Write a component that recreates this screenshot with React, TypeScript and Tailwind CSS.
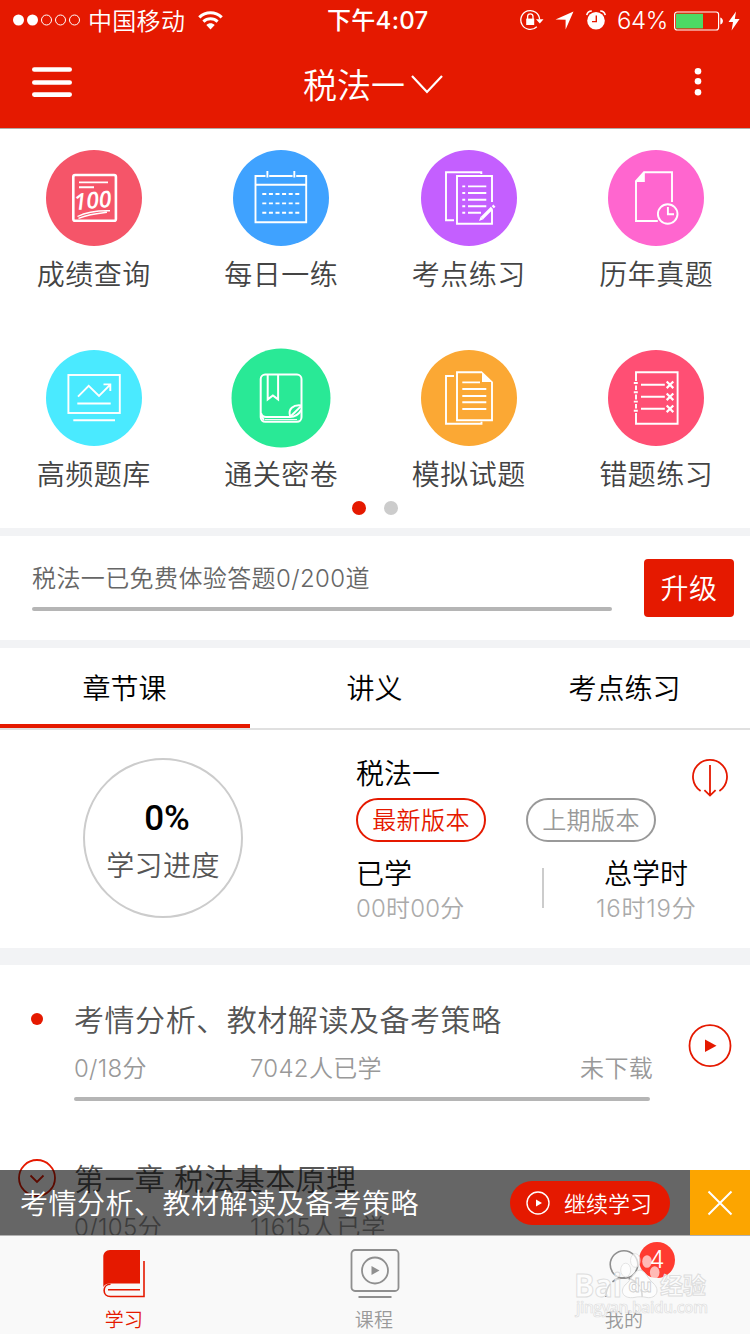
import React from "react";

const W = { fill: "none", stroke: "#fff", strokeWidth: 1.9 } as const;

function Score() {
  return (
    <g {...W}>
      <rect x="27.3" y="25" width="42.6" height="45.8" rx="1.8" strokeWidth="2.6" />
      <path d="M33 32.4H62M33 37.2H48" />
      <path d="M31.5 66.5C40 62 52 60.5 64 60.7M32.5 68.3C42 64.5 52 63.3 61 62.3" strokeWidth="1.4" />
      <text transform="rotate(-5 30 60)" x="28.5" y="60" fontSize="23" fontStyle="italic" fontWeight="600" fill="#fff" stroke="none" textLength="37.5" lengthAdjust="spacingAndGlyphs" style={{ fontFamily: "Open Sans, sans-serif" }}>100</text>
    </g>
  );
}

function Calendar() {
  return (
    <g {...W}>
      <path d="M32.5 26H22.5V72.3H73.2V26H63.2M36.2 26H59.6M22.5 34.8H73.2M34.4 21V27.5M61.3 21V27.5" />
      <path d="M29.3 44H67M29.3 53.4H67M29.3 62.8H67" strokeDasharray="4 2.6" />
    </g>
  );
}

function Notes() {
  return (
    <g {...W}>
      <path d="M60.3 24V22.3H25V70.3H33M71 52V26H36V73.8H71V60" />
      <path d="M41.3 36.4H44.2M41.3 43H44.2M41.3 49.8H44.2M41.3 56.3H44.2M41.3 62.8H44.2M47 36.4H65.3M47 43H65.3M47 49.8H65.3M47 56.3H65.3M47 62.8H60" />
      <path d="M61 68L71 58" strokeWidth="3.2" />
      <path d="M71.8 57.2L73.4 55.6" strokeWidth="3" />
      <path d="M59.7 66.5L62.4 69.3L58 71Z" fill="#fff" stroke="none" />
    </g>
  );
}

function History() {
  return (
    <g {...W}>
      <path d="M64 52V22.3H36L28 31V71H49.8" />
      <path d="M36.8 21.6V32H27.2Z" fill="#fff" stroke="none" />
      <circle cx="59.7" cy="64" r="9.8" />
      <path d="M59.9 57V64.2H66" />
    </g>
  );
}

function Trend() {
  return (
    <g {...W}>
      <rect x="22.4" y="25" width="51.4" height="38" />
      <path d="M32 46.7L42.7 35.9L53 46L64 34.8M57.5 34.4H64.3V41M31.3 53.5H64.7M27.3 70.2H69" />
    </g>
  );
}

function Book() {
  return (
    <g {...W} strokeWidth="2">
      <rect x="27.7" y="24.6" width="40.8" height="47.2" rx="4.5" />
      <path d="M34.7 24.8V49.4L39.9 45.4L45.1 49.4V24.8" />
      <path d="M28 63C29 66.5 31 67 33 67H57C62 67 66 64 68.3 60M31 70C29 68 28.5 67 28 65" />
      <path d="M57 66C55 59 60 54.5 68.3 55.5M57.2 66.8L67.8 56.4" />
      <path d="M32 69.6H64" strokeWidth="1" />
    </g>
  );
}

function Papers() {
  return (
    <g {...W}>
      <path d="M33 26H25V73.8H60.5V71.8M61 22.3H36V70.2H71V32" />
      <path d="M61 21.5L72 32H61Z" fill="#fff" stroke="none" />
      <path d="M41.3 32.4H59M41.3 39H65.3M41.3 46H65.3M41.3 52.3H65.3M41.3 59H65.3" />
    </g>
  );
}

function Mistakes() {
  return (
    <g {...W}>
      <path d="M28 31V22.3H69.6V73.8H28V63M28 35.5V40M28 44.5V49.5M28 54V58.5" />
      <path d="M25.8 33H29.8M25.8 42.2H29.8M25.8 51.6H29.8M25.8 60.8H29.8M33 34.8H56.8M33 46.8H56.8M33 58.8H56.8" />
      <path d="M58.7 31.5l6.6 6.6m0-6.6l-6.6 6.6M58.7 43.5l6.6 6.6m0-6.6l-6.6 6.6M58.7 55.5l6.6 6.6m0-6.6l-6.6 6.6" strokeWidth="2.2" />
    </g>
  );
}

const TILES = [
  { label: "成绩查询", color: "#f55569", r: 48, Icon: Score },
  { label: "每日一练", color: "#3fa2ff", r: 48, Icon: Calendar },
  { label: "考点练习", color: "#c45fff", r: 48, Icon: Notes },
  { label: "历年真题", color: "#ff66cf", r: 48, Icon: History },
  { label: "高频题库", color: "#4aeaff", r: 48, Icon: Trend },
  { label: "通关密卷", color: "#29e996", r: 49.5, Icon: Book },
  { label: "模拟试题", color: "#fba834", r: 48, Icon: Papers },
  { label: "错题练习", color: "#ff4f74", r: 48, Icon: Mistakes },
];

function StatusBar() {
  return (
    <div className="flex h-10 items-center pl-[13px] pr-[10px] pt-px">
      <div className="flex w-[314px] items-center">
        <svg className="-mt-px" width="68" height="12" viewBox="0 0 68 12" fill="none" stroke="#fff">
          <circle cx="5.5" cy="6" r="5.5" fill="#fff" stroke="none" />
          <circle cx="19.5" cy="6" r="5.5" fill="#fff" stroke="none" />
          <circle cx="33.5" cy="6" r="5" />
          <circle cx="47.5" cy="6" r="5" />
          <circle cx="61.5" cy="6" r="5" />
        </svg>
        <span className="ml-[7px] pt-0.5 text-2xl leading-10 tracking-[0.3px]">中国移动</span>
        <svg className="ml-[13px] -mt-px" width="25" height="19" viewBox="0 0 25 19" fill="none" stroke="#fff">
          <path d="M1.3 6.3C7.8 .2 17.2 .2 23.7 6.3" strokeWidth="3.2" />
          <path d="M5.4 10.6C9.4 6.8 15.6 6.8 19.6 10.6" strokeWidth="3" />
          <path d="M8.3 14L12.5 18.4L16.7 14C14.3 11.8 10.7 11.8 8.3 14Z" fill="#fff" stroke="none" />
        </svg>
      </div>
      <span className="pt-px text-2xl font-medium leading-10 tracking-[0.3px]">下午4:07</span>
      <div className="ml-auto flex items-center">
        <svg className="-mt-px" width="24" height="22" viewBox="0 0 24 22" fill="none" stroke="#fff" strokeWidth="1.3">
          <path d="M19.6 10.5A9.4 9.4 0 1 0 16.8 17.7" />
          <path d="M16 10.3H23.5L19.8 14.6Z" fill="#fff" stroke="none" />
          <rect x="6.2" y="9.6" width="8" height="6.4" fill="#fff" stroke="none" />
          <path d="M7.6 10V7.6a2.7 2.7 0 0 1 5.4 0V10" />
        </svg>
        <svg className="ml-[11px]" width="19" height="19" viewBox="0 0 19 19"><path d="M18.5 .5L10.6 18.5V8.7L.5 8.5Z" fill="#fff" /></svg>
        <svg className="ml-3 -mt-px" width="20" height="20" viewBox="0 0 20 20">
          <circle cx="10" cy="10.7" r="8.8" fill="#fff" />
          <path d="M.8 5.2C1.2 2.6 3 1 5.8 1M19.2 5.2C18.8 2.6 17 1 14.2 1" fill="none" stroke="#fff" strokeWidth="1.6" />
          <path d="M10.3 5.5V11.6H6" fill="none" stroke="#e51900" strokeWidth="1.4" />
        </svg>
        <span className="ml-[11px] pt-px text-2xl leading-10 tracking-[-0.3px]">64%</span>
        <svg className="ml-1.5" width="50" height="20" viewBox="0 0 50 20">
          <rect x=".6" y="1" width="44" height="18" rx="2.5" fill="none" stroke="#fff" strokeWidth="1.2" />
          <rect x="2" y="2.8" width="27" height="14.6" fill="#4cd964" />
          <path d="M46.3 6.5C49.8 7.5 49.8 12.5 46.3 13.5Z" fill="#fff" />
        </svg>
        <svg className="ml-1" width="12" height="20" viewBox="0 0 12 20"><path d="M8 .5L.5 11H5L3.6 19.5L11.6 8H6.8Z" fill="#fff" /></svg>
      </div>
    </div>
  );
}

function NavBar() {
  return (
    <div className="flex h-[88px] items-center pl-8">
      <svg className="-mt-1" width="40" height="32" viewBox="0 0 40 32" stroke="#fff" strokeWidth="4.6" strokeLinecap="round">
        <path d="M2.3 3.5H37.7M2.3 16.5H37.7M2.3 28.6H37.7" />
      </svg>
      <div className="ml-[231px] flex w-[391px] items-center">
        <span className="pt-[3px] text-[34px] leading-[50px]">税法一</span>
        <svg className="ml-1.5 mt-0.5" width="32" height="20" viewBox="0 0 32 20" fill="none" stroke="#fff" strokeWidth="2.2"><path d="M1 1L16 17L31 1" /></svg>
      </div>
      <svg className="-mt-1" width="8" height="28" viewBox="0 0 8 28" fill="#fff">
        <circle cx="4" cy="3.3" r="3.3" /><circle cx="4" cy="13.3" r="3.3" /><circle cx="4" cy="24.3" r="3.3" />
      </svg>
    </div>
  );
}

function Tiles() {
  return (
    <section className="h-[400px] border-t border-[#b2aaa8] bg-white pt-[21px]">
      <div className="grid h-[336px] grid-cols-4 grid-rows-[200px_136px]">
        {TILES.map(({ label, color, r, Icon }) => (
          <div key={label} className="flex flex-col items-center">
            <svg className="overflow-visible" width="96" height="96" viewBox="0 0 96 96">
              <circle cx="48" cy="48" r={r} fill={color} />
              <Icon />
            </svg>
            <span className="mt-[9px] text-[28px] leading-10 tracking-[0.5px] text-[#444]">{label}</span>
          </div>
        ))}
      </div>
      <div className="mt-[15px] flex justify-center gap-[18px]">
        <span className="size-3.5 rounded-full bg-[#e51900]" />
        <span className="size-3.5 rounded-full bg-[#ccc]" />
      </div>
    </section>
  );
}

function Trial() {
  return (
    <section className="flex h-[104px] items-center justify-between bg-white pl-8 pr-4">
      <div className="w-[580px] pb-1">
        <p className="text-2xl leading-9 tracking-[0.4px] text-[#666]">税法一已免费体验答题0/200道</p>
        <div className="mt-2.5 h-1 rounded-full bg-[#b5b5b5]" />
      </div>
      <button className="h-[58px] w-[90px] rounded bg-[#e51900] pt-[2px] text-[28px] tracking-[0.5px] text-white">升级</button>
    </section>
  );
}

function Tabs() {
  return (
    <nav className="grid h-[82px] grid-cols-3 border-b-2 border-[#e0e0e0] bg-white text-[28px] leading-[70px] text-black">
      <div className="h-20 border-b-4 border-[#e51900] pt-[6px] pr-px text-center">章节课</div>
      <div className="pt-[6px] pr-px text-center">讲义</div>
      <div className="pt-[6px] pr-px text-center">考点练习</div>
    </nav>
  );
}

function Overview() {
  return (
    <section className="flex h-[218px] bg-white pt-7">
      <div className="ml-[83px] flex size-40 flex-col items-center rounded-full border-2 border-[#ccc] pt-[38px]">
        <span className="pl-2 font-['Roboto'] text-[35px] font-medium leading-[42px] text-black">0%</span>
        <span className="mt-[4px] text-[28px] leading-[44px] tracking-[0.4px] text-[#555]">学习进度</span>
      </div>
      <div className="ml-[113px] w-[340px]">
        <p className="h-10 pt-px text-[28px] leading-[30px] text-black">税法一</p>
        <div className="flex gap-10 text-2xl leading-[41px]">
          <span className="h-11 w-[130px] rounded-full border-2 border-[#e51900] text-center tracking-[0.4px] text-[#e51900]">最新版本</span>
          <span className="h-11 w-[130px] rounded-full border-2 border-[#999] text-center tracking-[0.4px] text-[#999]">上期版本</span>
        </div>
        <div className="mt-3 flex">
          <div className="w-[186px] pt-[2px]">
            <p className="text-[28px] leading-9 text-black">已学</p>
            <p className="pt-px text-2xl leading-8 tracking-[0.2px] text-[#aaa]">00时00分</p>
          </div>
          <div className="mt-3.5 h-10 w-0.5 bg-[#ccc]" />
          <div className="ml-[52px] w-[100px] pt-[2px]">
            <p className="whitespace-nowrap pl-2 text-[28px] leading-9 text-black">总学时</p>
            <p className="whitespace-nowrap pt-px text-2xl leading-8 tracking-[0.8px] text-[#aaa]">16时19分</p>
          </div>
        </div>
      </div>
      <svg className="-ml-[5px]" width="38" height="40" viewBox="0 0 38 40" fill="none" stroke="#e51900" strokeWidth="1.8">
        <path d="M9.6 33A17 17 0 1 1 28.4 33M19 7V37.3M13.4 32.2L19 37.6L24.6 32.2" />
      </svg>
    </section>
  );
}

function Chapters() {
  return (
    <section className="relative h-[270px] overflow-hidden bg-white">
      <div className="flex h-[152px] pl-[31px] pt-[34px]">
        <span className="mt-[14px] size-[12px] rounded-full bg-[#e51900]" />
        <div className="-mt-px ml-[31px] w-[576px]">
          <p className="text-[30px] leading-[44px] tracking-[0.55px] text-[#555]">考情分析、教材解读及备考策略</p>
          <div className="mt-[9px] flex whitespace-nowrap text-2xl leading-9 text-[#999]">
            <span className="w-[176px] shrink-0 tracking-[0.3px]">0/18分</span>
            <span className="w-[330px] shrink-0 tracking-[0.3px]">7042人已学</span>
            <span className="tracking-[0.4px]">未下载</span>
          </div>
          <div className="mt-2.5 h-1 rounded-full bg-[#b5b5b5]" />
        </div>
        <svg className="ml-[37.500px] mt-[25px]" width="44" height="44" viewBox="0 0 44 44">
          <circle cx="22" cy="21.7" r="20.5" fill="none" stroke="#e51900" strokeWidth="1.8" />
          <path d="M17 15.5V28L28.5 21.7Z" fill="#e51900" />
        </svg>
      </div>
      <div className="flex pl-[18px] pt-[42px]">
        <svg width="38" height="38" viewBox="0 0 38 38" fill="none" stroke="#e51900" strokeWidth="1.8">
          <circle cx="19" cy="19" r="18" /><path d="M12.5 16.5L19 23L25.5 16.5" />
        </svg>
        <div className="-mt-0.5 ml-[18px] w-[576px]">
          <p className="text-[30px] leading-[44px] tracking-[0.4px] text-[#555]">第一章 税法基本原理</p>
          <div className="mt-[9px] flex text-2xl leading-9 text-[#999]">
            <span className="w-[176px] tracking-[0.4px]">0/105分</span>
            <span className="tracking-[0.9px]">11615人已学</span>
          </div>
        </div>
      </div>
      <div className="absolute inset-x-0 bottom-0 flex h-[65px] items-center bg-black/60 text-white">
        <span className="ml-5 w-[490px] pt-[3px] text-[28px] leading-10 tracking-[0.5px]">考情分析、教材解读及备考策略</span>
        <span className="flex h-11 w-40 items-center rounded-full bg-[#e51900] pl-4 text-[22px] leading-10">
          <svg className="mr-3.5" width="24" height="24" viewBox="0 0 24 24">
            <circle cx="12" cy="12" r="11" fill="none" stroke="#fff" strokeWidth="1.4" />
            <path d="M10 8.6V15.4L16 12Z" fill="#fff" />
          </svg>
          <span className="pt-0.5">继续学习</span>
        </span>
        <span className="ml-5 flex h-full w-[60px] items-center justify-center bg-[#fca500]">
          <svg width="26" height="26" viewBox="0 0 26 26" stroke="#fff" strokeWidth="2"><path d="M1.5 1.5L24.5 24.5M24.5 1.5L1.5 24.5" /></svg>
        </span>
      </div>
    </section>
  );
}

function Watermark() {
  return (
    <svg className="pointer-events-none absolute left-[74px] top-3" width="138" height="72" viewBox="0 0 138 72" fill="#fff" fillOpacity=".65" stroke="#dedede" strokeWidth="1" fontWeight="700">
      <text x="0" y="49" fontSize="33" textLength="48" lengthAdjust="spacingAndGlyphs" style={{ fontFamily: "Open Sans, sans-serif" }}>Bai</text>
      <g strokeOpacity=".8">
        <ellipse cx="51.7" cy="22" rx="5" ry="6.8" />
        <ellipse cx="61.3" cy="12.5" rx="4.8" ry="6.8" />
      </g>
      <g stroke="none">
        <ellipse cx="73" cy="13.5" rx="4.8" ry="6.3" />
        <ellipse cx="80.7" cy="24.5" rx="4.8" ry="6.3" />
      </g>
      <path d="M66 22C72 23 73 30 79 35C87 42 82 51 73 49.500C69 48.500 64 48.500 60 49.500C50 51 45 44 51 37C58 32 59 23 66 22Z" />
      <text x="54.500" y="44" fontSize="18" stroke="#d0d0d0" strokeWidth=".9" style={{ fontFamily: "Open Sans, sans-serif" }}>du</text>
      <text x="86" y="45.500" fontSize="23" style={{ fontFamily: "Noto Sans CJK SC, sans-serif" }}>经验</text>
      <text x="2" y="64.500" fontSize="15.500" fontWeight="600" textLength="132" strokeWidth=".7" style={{ fontFamily: "Open Sans, sans-serif" }}>jingyan.baidu.com</text>
    </svg>
  );
}

function TabBar() {
  return (
    <footer className="grid h-[99px] grid-cols-3 border-t border-[#b2b2b2] bg-[#f9f9f9] text-[19px] leading-7 text-[#999]">
      <div className="flex flex-col items-center pr-0.5 pt-3.5 text-[#e51900]">
        <svg width="42" height="48" viewBox="0 0 42 48" fill="none" stroke="#e51900" strokeWidth="1.6">
          <path d="M7 0H37V33.5H7C3.5 33.5 1.5 35 .3 37V7C.3 3 3 0 7 0Z" fill="#e51900" stroke="none" />
          <path d="M41 11V46.5H7.5C-1 46.5-1 34.3 7.5 34.3M5 39.8H37" />
        </svg>
        <span className="mt-[9px] tracking-[0.3px]">学习</span>
      </div>
      <div className="flex flex-col items-center pt-3">
        <svg width="50" height="50" viewBox="0 0 50 50" fill="none" stroke="#8f8f8f" strokeWidth="1.8">
          <rect x="1.5" y="2" width="47" height="41" rx="3.5" />
          <circle cx="25" cy="22.500" r="13" /><path d="M8.500 49H41.500" />
          <path d="M21.500 18V27L29.500 22.500Z" fill="#8f8f8f" stroke="none" />
        </svg>
        <span className="mt-[9px] pr-0.5 tracking-[0.3px]">课程</span>
      </div>
      <div className="relative flex flex-col items-center pr-0.5 pt-3">
        <svg width="40" height="50" viewBox="0 0 40 50" fill="none" stroke="#8f8f8f" strokeWidth="1.6">
          <circle cx="20" cy="16.500" r="13.800" /><path d="M1.800 49C1.800 23.500 38.200 23.500 38.200 49" strokeDasharray="14 3" />
        </svg>
        <span className="mt-[9px] tracking-[0.3px]">我的</span>
        <span className="absolute left-[139px] top-[6px] size-9 rounded-full bg-[#ff3b30] text-center text-2xl leading-9 text-white">4</span>
        <Watermark />
      </div>
    </footer>
  );
}

export default function App() {
  return (
    <div className="flex h-[1334px] w-[750px] flex-col overflow-hidden bg-[#f2f3f5] font-['Inter','Noto_Sans_CJK_SC',sans-serif] font-[350]">
      <header className="bg-[#e51900] text-white">
        <StatusBar />
        <NavBar />
      </header>
      <Tiles />
      <div className="mt-2"><Trial /></div>
      <div className="mt-2"><Tabs /></div>
      <Overview />
      <div className="mt-[17px]"><Chapters /></div>
      <TabBar />
    </div>
  );
}
